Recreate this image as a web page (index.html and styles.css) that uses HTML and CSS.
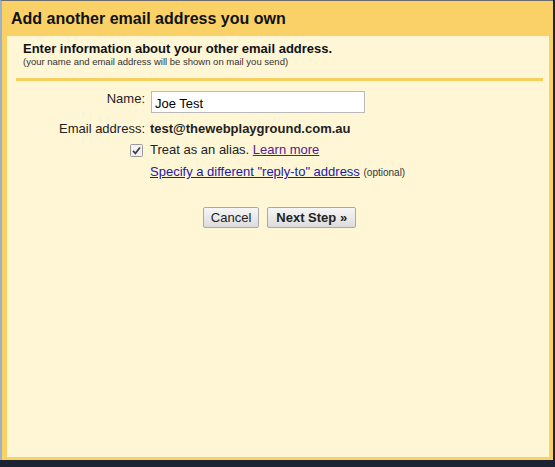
FILE: index.html
```html
<!DOCTYPE html>
<html lang="en">
<head>
  <meta charset="UTF-8">
  <title>Add another email address you own</title>
  <link rel="stylesheet" href="styles.css">
</head>
<body>
  <div class="dialog">
    <div class="dialog-title">Add another email address you own</div>
    <div class="dialog-body">
      <div class="intro">
        <div class="intro-heading">Enter information about your other email address.</div>
        <div class="intro-note">(your name and email address will be shown on mail you send)</div>
      </div>

      <div class="form">
        <div class="form-row name-row">
          <label class="form-label" for="name">Name:</label>
          <input class="text-input" id="name" type="text" value="Joe Test">
        </div>
        <div class="form-row email-row">
          <span class="form-label">Email address:</span>
          <span class="email-value">test@thewebplayground.com.au</span>
        </div>
        <div class="form-row">
          <span class="form-label"></span>
          <span class="alias">
            <svg class="check" width="13" height="13" viewBox="0 0 13 13">
              <rect x="0.5" y="0.5" width="12" height="12" rx="1" fill="#f2f2f2" stroke="#9a9a9a"/>
              <path d="M3 6.8 L5.4 9.3 L10 3.5" fill="none" stroke="#444" stroke-width="1.8"/>
            </svg>
            <span>Treat as an alias. <a href="#" class="visited">Learn more</a></span>
          </span>
        </div>
        <div class="form-row">
          <span class="form-label"></span>
          <span><a href="#">Specify a different "reply-to" address</a> <span class="optional">(optional)</span></span>
        </div>
      </div>

      <div class="actions">
        <button class="btn">Cancel</button>
        <button class="btn btn-primary">Next Step &raquo;</button>
      </div>
    </div>
  </div>
</body>
</html>
```

FILE: styles.css
```css
html, body {
  margin: 0;
  height: 100%;
}

body {
  background-color: #1c2433;
  font-family: 'Liberation Sans', Arial, sans-serif;
  font-size: 13px;
  color: #222;
}

.dialog {
  box-sizing: border-box;
  width: 553px;
  height: 460px;
  background-color: #f9d166;
  border-left: 2px solid #9fb1c6;
  border-top: 1px solid #6d6d6d;
  padding: 0 4px 3px 5px;
  display: flex;
  flex-direction: column;
}

.dialog-title {
  height: 35px;
  line-height: 35px;
  padding-left: 4px;
  font-size: 16px;
  font-weight: bold;
  color: #111;
}

.dialog-body {
  flex: 1;
  background-color: #fff6d6;
  padding: 0 6px 0 9px;
}

.intro {
  padding: 5px 0 10px 7px;
  border-bottom: 3px solid #f7cf5f;
}

.intro-heading {
  font-size: 13px;
  font-weight: bold;
  color: #111;
  line-height: 15px;
}

.intro-note {
  font-size: 9.5px;
  color: #333;
  line-height: 12px;
}

.form {
  padding-top: 10px;
}

.form-row {
  display: flex;
  align-items: center;
  margin-bottom: 6px;
  line-height: 16px;
}

.form-label {
  width: 129px;
  text-align: right;
  padding-right: 5px;
  flex-shrink: 0;
}

.name-row {
  margin-bottom: 8px;
}

.email-row {
  margin-bottom: 5px;
}

.name-row .form-label {
  align-self: flex-start;
  padding-right: 6px;
}

.text-input {
  box-sizing: border-box;
  width: 214px;
  height: 22px;
  border: 1px solid #b9b9b9;
  background: #fff;
  font-family: inherit;
  font-size: 13px;
  padding: 2px 3px 0;
  margin: 0;
}

.email-value {
  font-weight: bold;
}

.alias {
  margin-left: -20px;
  display: flex;
  align-items: center;
}

.check {
  flex-shrink: 0;
  margin-right: 7px;
}

a {
  color: #1a1aa6;
}

a.visited {
  color: #551a8b;
}

.optional {
  font-size: 10px;
  color: #333;
}

.actions {
  display: flex;
  justify-content: center;
  gap: 8px;
  padding: 20px 0 0 0;
}

.btn {
  height: 21px;
  padding: 0 7px;
  font-family: inherit;
  font-size: 13px;
  color: #222;
  background: linear-gradient(#f6f6f6, #dcdcdc);
  border: 1px solid #a9a9a9;
  border-radius: 2px;
}

.btn-primary {
  font-weight: bold;
  padding: 0 8px;
}
```
